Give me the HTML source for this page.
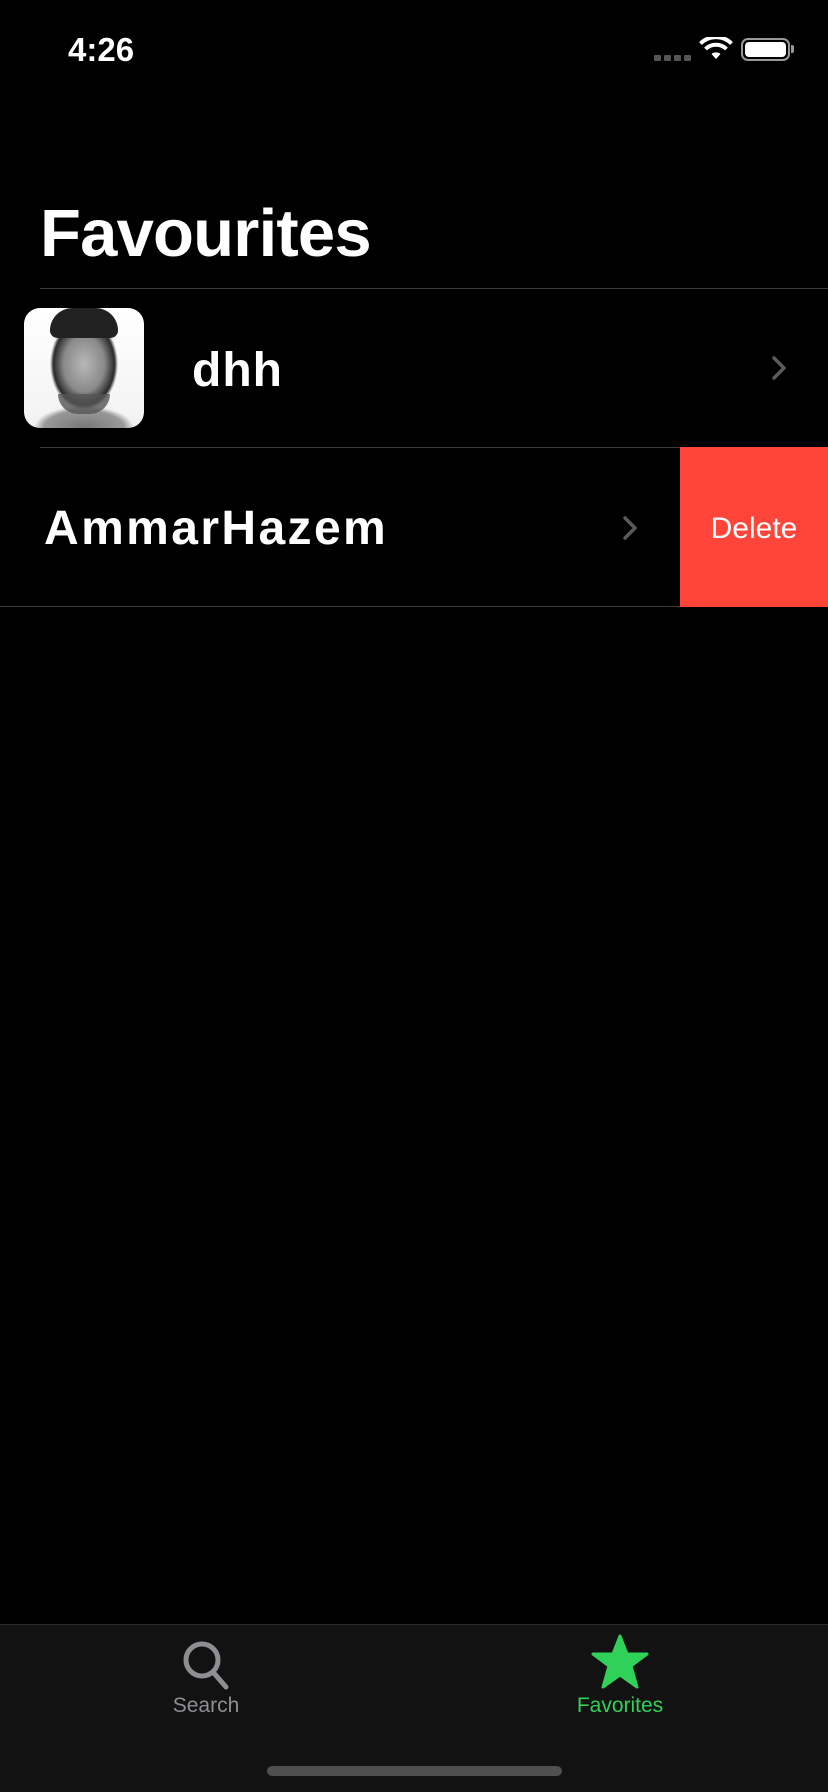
<!DOCTYPE html>
<html><head><meta charset="utf-8"><style>
*{margin:0;padding:0;box-sizing:border-box}
body{width:828px;height:1792px;background:#000;position:relative;overflow:hidden;font-family:"Liberation Sans",sans-serif;color:#fff}
.a{position:absolute}
.sep{position:absolute;height:1px;background:#3a3a3c}
</style></head><body>
<div class="a" style="left:68px;top:31px;font-size:33px;font-weight:600;">4:26</div>
<div class="a" style="left:654px;top:55px;display:flex;gap:3px">
<div style="width:7px;height:6px;background:#555;border-radius:1px"></div><div style="width:7px;height:6px;background:#555;border-radius:1px"></div><div style="width:7px;height:6px;background:#555;border-radius:1px"></div><div style="width:7px;height:6px;background:#555;border-radius:1px"></div></div>
<svg class="a" style="left:699px;top:37px" width="34" height="24" viewBox="0 0 34 24"><path d="M17 22 L12.5 17 A7 7 0 0 1 21.5 17 Z" fill="#fff"/><path d="M6.5 12 A15 15 0 0 1 27.5 12" stroke="#fff" stroke-width="4" fill="none"/><path d="M1.5 6.5 A22 22 0 0 1 32.5 6.5" stroke="#fff" stroke-width="4" fill="none"/></svg>
<div class="a" style="left:741px;top:38px;width:49px;height:23px;border:2px solid #999;border-radius:7px;padding:2px"><div style="width:100%;height:100%;background:#fff;border-radius:4px"></div></div>
<div class="a" style="left:791px;top:45px;width:3px;height:8px;background:#999;border-radius:0 2px 2px 0"></div>
<div class="a" style="left:40px;top:196px;font-size:67px;font-weight:700;line-height:76px;letter-spacing:-0.8px">Favourites</div>
<div class="sep" style="left:40px;top:288px;width:788px"></div>
<div class="a" style="left:24px;top:308px;width:120px;height:120px;border-radius:16px;background:radial-gradient(ellipse 34px 46px at 60px 56px,#b8b8b8 0,#8a8a8a 60%,#2a2a2a 90%,transparent 100%),radial-gradient(ellipse 50px 22px at 60px 120px,#777 0,#999 80%,transparent 100%),linear-gradient(#fff,#f2f2f2);overflow:hidden">
<div style="position:absolute;left:26px;top:0;width:68px;height:30px;background:#222;border-radius:30px 30px 10px 10px"></div>
<div style="position:absolute;left:34px;top:86px;width:52px;height:20px;background:#555;border-radius:0 0 26px 26px;opacity:.8"></div>
</div>
<div class="a" style="left:192px;top:343px;font-size:48px;font-weight:700;line-height:56px;letter-spacing:1px">dhh</div>
<svg class="a" style="left:771px;top:356px" width="16" height="24" viewBox="0 0 16 24"><path d="M3 2 L13 12 L3 22" stroke="#5a5a5e" stroke-width="3.5" fill="none" stroke-linecap="round" stroke-linejoin="round"/></svg>
<div class="sep" style="left:40px;top:447px;width:640px"></div>
<div class="a" style="left:44px;top:501px;font-size:48px;font-weight:700;line-height:56px;letter-spacing:2.4px">AmmarHazem</div>
<svg class="a" style="left:622px;top:516px" width="16" height="24" viewBox="0 0 16 24"><path d="M3 2 L13 12 L3 22" stroke="#5a5a5e" stroke-width="3.5" fill="none" stroke-linecap="round" stroke-linejoin="round"/></svg>
<div class="a" style="left:680px;top:447px;width:148px;height:160px;background:#ff453a;display:flex;align-items:center;justify-content:center;font-size:30px;font-weight:500;padding-top:4px">Delete</div>
<div class="sep" style="left:0;top:606px;width:680px"></div>
<div class="a" style="left:0;top:1624px;width:828px;height:168px;background:#121212;border-top:1px solid #2c2c2e"></div>
<svg class="a" style="left:182px;top:1640px" width="48" height="50" viewBox="0 0 48 50"><circle cx="20" cy="20" r="16" stroke="#8e8e93" stroke-width="5" fill="none"/><path d="M31 32 L44 47" stroke="#8e8e93" stroke-width="5" stroke-linecap="round"/></svg>
<div class="a" style="left:0;top:1694px;width:412px;text-align:center;font-size:21px;color:#8e8e93">Search</div>
<svg class="a" style="left:590px;top:1634px" width="60" height="56" viewBox="0 0 60 56"><path d="M30 2 L37 20 L57 20 L41 32 L47 53 L30 41 L13 53 L19 32 L3 20 L23 20 Z" fill="#30d158" stroke="#30d158" stroke-width="3" stroke-linejoin="round"/></svg>
<div class="a" style="left:414px;top:1694px;width:412px;text-align:center;font-size:21px;color:#30d158">Favorites</div>
<div class="a" style="left:267px;top:1766px;width:295px;height:10px;background:#4f4f4f;border-radius:5px"></div>
</body></html>
